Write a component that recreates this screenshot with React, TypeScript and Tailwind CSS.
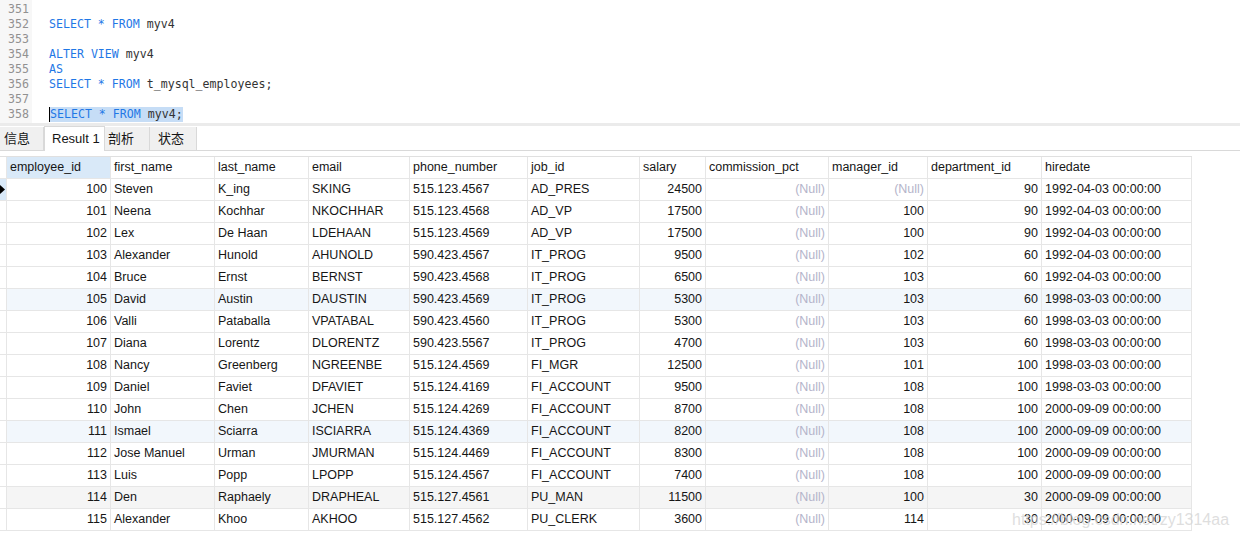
import React from "react"

type Row = {
  id: number
  first: string
  last: string
  email: string
  phone: string
  job: string
  salary: number
  mgr: number | null
  dept: number
  hire: string
}

const rows: Row[] = [
  { id: 100, first: "Steven", last: "K_ing", email: "SKING", phone: "515.123.4567", job: "AD_PRES", salary: 24500, mgr: null, dept: 90, hire: "1992-04-03 00:00:00" },
  { id: 101, first: "Neena", last: "Kochhar", email: "NKOCHHAR", phone: "515.123.4568", job: "AD_VP", salary: 17500, mgr: 100, dept: 90, hire: "1992-04-03 00:00:00" },
  { id: 102, first: "Lex", last: "De Haan", email: "LDEHAAN", phone: "515.123.4569", job: "AD_VP", salary: 17500, mgr: 100, dept: 90, hire: "1992-04-03 00:00:00" },
  { id: 103, first: "Alexander", last: "Hunold", email: "AHUNOLD", phone: "590.423.4567", job: "IT_PROG", salary: 9500, mgr: 102, dept: 60, hire: "1992-04-03 00:00:00" },
  { id: 104, first: "Bruce", last: "Ernst", email: "BERNST", phone: "590.423.4568", job: "IT_PROG", salary: 6500, mgr: 103, dept: 60, hire: "1992-04-03 00:00:00" },
  { id: 105, first: "David", last: "Austin", email: "DAUSTIN", phone: "590.423.4569", job: "IT_PROG", salary: 5300, mgr: 103, dept: 60, hire: "1998-03-03 00:00:00" },
  { id: 106, first: "Valli", last: "Pataballa", email: "VPATABAL", phone: "590.423.4560", job: "IT_PROG", salary: 5300, mgr: 103, dept: 60, hire: "1998-03-03 00:00:00" },
  { id: 107, first: "Diana", last: "Lorentz", email: "DLORENTZ", phone: "590.423.5567", job: "IT_PROG", salary: 4700, mgr: 103, dept: 60, hire: "1998-03-03 00:00:00" },
  { id: 108, first: "Nancy", last: "Greenberg", email: "NGREENBE", phone: "515.124.4569", job: "FI_MGR", salary: 12500, mgr: 101, dept: 100, hire: "1998-03-03 00:00:00" },
  { id: 109, first: "Daniel", last: "Faviet", email: "DFAVIET", phone: "515.124.4169", job: "FI_ACCOUNT", salary: 9500, mgr: 108, dept: 100, hire: "1998-03-03 00:00:00" },
  { id: 110, first: "John", last: "Chen", email: "JCHEN", phone: "515.124.4269", job: "FI_ACCOUNT", salary: 8700, mgr: 108, dept: 100, hire: "2000-09-09 00:00:00" },
  { id: 111, first: "Ismael", last: "Sciarra", email: "ISCIARRA", phone: "515.124.4369", job: "FI_ACCOUNT", salary: 8200, mgr: 108, dept: 100, hire: "2000-09-09 00:00:00" },
  { id: 112, first: "Jose Manuel", last: "Urman", email: "JMURMAN", phone: "515.124.4469", job: "FI_ACCOUNT", salary: 8300, mgr: 108, dept: 100, hire: "2000-09-09 00:00:00" },
  { id: 113, first: "Luis", last: "Popp", email: "LPOPP", phone: "515.124.4567", job: "FI_ACCOUNT", salary: 7400, mgr: 108, dept: 100, hire: "2000-09-09 00:00:00" },
  { id: 114, first: "Den", last: "Raphaely", email: "DRAPHEAL", phone: "515.127.4561", job: "PU_MAN", salary: 11500, mgr: 100, dept: 30, hire: "2000-09-09 00:00:00" },
  { id: 115, first: "Alexander", last: "Khoo", email: "AKHOO", phone: "515.127.4562", job: "PU_CLERK", salary: 3600, mgr: 114, dept: 30, hire: "2000-09-09 00:00:00" },
]

const headers = ["employee_id", "first_name", "last_name", "email", "phone_number", "job_id", "salary", "commission_pct", "manager_id", "department_id", "hiredate"]

// editor lines: [number, tokens]
const K = "text-[#1f78e6]"
const I = "text-[#333333]"
const code: [number, [string, string][]][] = [
  [351, []],
  [352, [["SELECT * FROM", K], [" myv4", I]]],
  [353, []],
  [354, [["ALTER VIEW", K], [" myv4", I]]],
  [355, [["AS", K]]],
  [356, [["SELECT * FROM", K], [" t_mysql_employees;", I]]],
  [357, []],
]

function Null() {
  return <span className="text-[#b4b4ca]">(Null)</span>
}

export default function App() {
  const cell = "h-[22px] border-r border-b border-[#e6e6e6] flex items-center whitespace-nowrap overflow-hidden"
  return (
    <div className="relative w-[1240px] h-[538px] overflow-hidden bg-white font-['Liberation_Sans','Noto_Sans_CJK_SC',sans-serif] text-[12.5px] text-[#161616]">
      {/* Editor */}
      <div className="flex h-[123px] font-['DejaVu_Sans_Mono',monospace] text-[11.6px] leading-[15px]">
        <div className="w-[32px] bg-[#f7f7f7] pt-[2px] pr-[3px] text-right text-[#919191]">
          {code.map(([n]) => (
            <div key={n} className="h-[15px]">{n}</div>
          ))}
          <div className="h-[15px]">358</div>
        </div>
        <div className="flex-1 pt-[2px] pl-[17px] whitespace-pre">
          {code.map(([n, toks]) => (
            <div key={n} className="h-[15px]">
              {toks.map(([t, c], i) => (
                <span key={i} className={c}>{t}</span>
              ))}
            </div>
          ))}
          <div className="h-[15px] flex">
            <span className="bg-[#c6ddf6] border-l border-black">
              <span className={K}>SELECT * FROM</span>
              <span className={I}> myv4;</span>
            </span>
          </div>
        </div>
      </div>
      <div className="h-[3px] bg-[#ebebeb]" />

      {/* Tabs */}
      <div className="flex h-[25px] items-end border-b border-[#d9d9d9] text-[13px]">
        <div className="w-[44px] h-[23px] bg-[#f0f0f0] border-r border-[#d9d9d9] pl-[4px] flex items-center">信息</div>
        <div className="w-[61px] h-[25px] -mb-px bg-white border-t border-x border-[#d9d9d9] pl-[7px] flex items-center">Result 1</div>
        <div className="w-[45px] h-[23px] bg-[#f0f0f0] border-r border-[#d9d9d9] pl-[3px] flex items-center">剖析</div>
        <div className="w-[47px] h-[23px] bg-[#f0f0f0] border-r border-[#d9d9d9] pl-[8px] flex items-center">状态</div>
      </div>

      {/* Grid */}
      <div className="mt-[5px] w-[1192px] border-t border-[#e0e0e0] grid grid-cols-[7px_104px_104px_94px_101px_118px_112px_66px_123px_99px_114px_150px]">
        <div className={`${cell} h-[21px]`} />
        {headers.map((h, i) => (
          <div key={h} className={`${cell} h-[21px] pl-[3px] ${i === 0 ? "bg-[#d9e9f8]" : ""}`}>{h}</div>
        ))}
        {rows.map((r, ri) => {
          const bg = ri === 5 || ri === 11 ? "bg-[#f2f7fc]" : ri === 14 ? "bg-[#f5f5f5]" : ""
          const L = `${cell} ${bg} pl-[3px]`
          const R = `${cell} ${bg} justify-end pr-[3px]`
          return (
            <React.Fragment key={r.id}>
              <div className={`${cell} ${ri === 0 ? "bg-[#d9e9f8]" : ""}`}>
                {ri === 0 && (
                  <svg width="6" height="9" viewBox="0 0 6 9">
                    <path d="M0 0 L5 4.5 L0 9 Z" fill="#000" />
                  </svg>
                )}
              </div>
              <div className={R}>{r.id}</div>
              <div className={L}>{r.first}</div>
              <div className={L}>{r.last}</div>
              <div className={L}>{r.email}</div>
              <div className={L}>{r.phone}</div>
              <div className={L}>{r.job}</div>
              <div className={R}>{r.salary}</div>
              <div className={R}><Null /></div>
              <div className={R}>{r.mgr === null ? <Null /> : r.mgr}</div>
              <div className={R}>{r.dept}</div>
              <div className={L}>{r.hire}</div>
            </React.Fragment>
          )
        })}
      </div>

      {/* watermark */}
      <div className="absolute left-[1012px] top-[508px] text-[16px] text-[#d6d6d6]/80 whitespace-nowrap pointer-events-none">
        https://blog.csdn.net/zy1314aa
      </div>
    </div>
  )
}
